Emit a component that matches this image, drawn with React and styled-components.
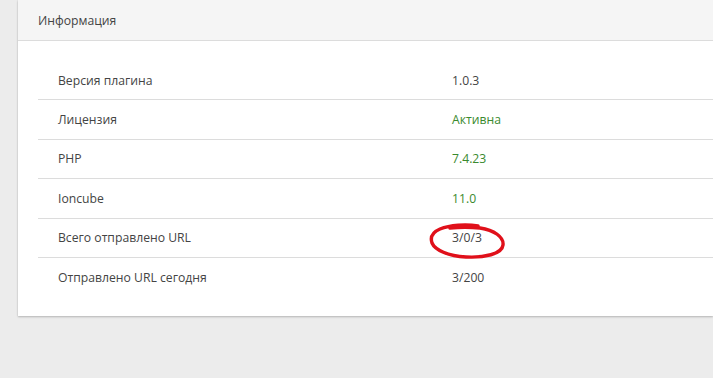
import styled, { createGlobalStyle } from "styled-components";

const GlobalStyle = createGlobalStyle`
  html, body {
    margin: 0;
    padding: 0;
    background: #ececec;
    overflow: hidden;
  }
  body {
    font-family: "Open Sans", "Liberation Sans", sans-serif;
    color: #444;
  }
`;

const Page = styled.div`
  width: 713px;
  height: 378px;
  padding-left: 18px;
  box-sizing: border-box;
  overflow: hidden;
`;

const Card = styled.section`
  width: 695px;
  background: #fff;
  box-shadow: 0 1px 2px rgba(0, 0, 0, 0.22), 0 0 1px rgba(0, 0, 0, 0.12);
`;

const CardHeader = styled.header`
  height: 40px;
  display: flex;
  align-items: center;
  padding: 0 20px;
  background: #f5f5f5;
  border-bottom: 1px solid #dcdcdc;
  font-size: 12.2px;
  color: #444;
`;

const CardBody = styled.div`
  padding: 20px 0 20px 20px;
`;

const Row = styled.div`
  display: grid;
  grid-template-columns: 414px 1fr;
  align-items: center;
  height: 38.4px;
  font-size: 12.2px;
  border-bottom: 1px solid #dcdcdc;

  &:last-child {
    border-bottom: none;
  }
`;

const Label = styled.div`
  padding-left: 20px;
  color: #444;
`;

const Value = styled.div`
  position: relative;
  color: ${(p) => (p.$ok ? "#3a8a2e" : "#444")};
`;

const Mark = styled.svg`
  position: absolute;
  left: -24px;
  top: -6px;
  width: 78px;
  height: 37px;
  pointer-events: none;
`;

const rows = [
  { label: "Версия плагина", value: "1.0.3" },
  { label: "Лицензия", value: "Активна", ok: true },
  { label: "PHP", value: "7.4.23", ok: true },
  { label: "Ioncube", value: "11.0", ok: true },
  { label: "Всего отправлено URL", value: "3/0/3", marked: true },
  { label: "Отправлено URL сегодня", value: "3/200" },
];

export default function App() {
  return (
    <Page>
      <GlobalStyle />
      <Card>
        <CardHeader>Информация</CardHeader>
        <CardBody>
          {rows.map((r) => (
            <Row key={r.label}>
              <Label>{r.label}</Label>
              <Value $ok={r.ok}>
                {r.value}
                {r.marked && (
                  <Mark viewBox="0 0 78 37">
                    <path
                      d="M50 3 C38 1 22 2 12 6 C5 9 2 14 4 20 C7 27 20 33 38 34 C56 35 74 31 75 22 C76 14 66 7 52 5 C42 4 32 4 22 5"
                      fill="none"
                      stroke="#e0101a"
                      strokeWidth="3.4"
                      strokeLinecap="round"
                    />
                  </Mark>
                )}
              </Value>
            </Row>
          ))}
        </CardBody>
      </Card>
    </Page>
  );
}
